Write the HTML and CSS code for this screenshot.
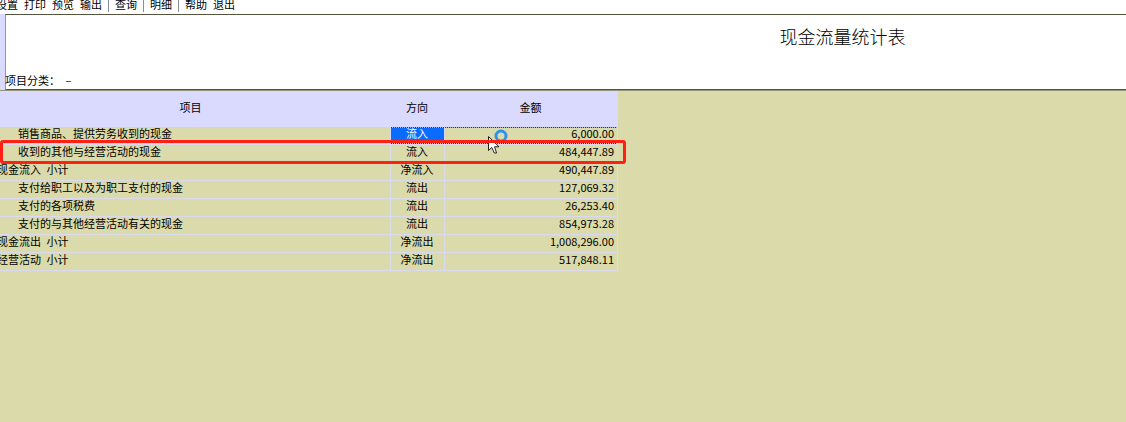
FILE: index.html
```
<!DOCTYPE html>
<html lang="zh-CN">
<head>
<meta charset="utf-8">
<title>现金流量统计表</title>
<link rel="stylesheet" href="styles.css">
</head>
<body>
<nav class="toolbar">
  <button type="button">设置</button>
  <button type="button">打印</button>
  <button type="button">预览</button>
  <button type="button">输出</button>
  <span class="separator"></span>
  <button type="button">查询</button>
  <span class="separator"></span>
  <button type="button">明细</button>
  <span class="separator"></span>
  <button type="button">帮助</button>
  <button type="button">退出</button>
</nav>
<header class="report-head">
  <div class="sheet">
    <h1>现金流量统计表</h1>
    <p>项目分类：&ensp;–</p>
  </div>
</header>
<main class="grid-area">
  <table class="cashflow">
    <colgroup><col class="col-item"><col class="col-direction"><col class="col-amount"></colgroup>
    <thead>
      <tr><th scope="col">项目</th><th scope="col">方向</th><th scope="col">金额</th></tr>
    </thead>
    <tbody>
      <tr class="current"><td class="detail">销售商品、提供劳务收到的现金</td><td class="selected">流入</td><td>6,000.00</td></tr>
      <tr><td class="detail">收到的其他与经营活动的现金</td><td>流入</td><td>484,447.89</td></tr>
      <tr><td>现金流入&ensp;小计</td><td>净流入</td><td>490,447.89</td></tr>
      <tr><td class="detail">支付给职工以及为职工支付的现金</td><td>流出</td><td>127,069.32</td></tr>
      <tr><td class="detail">支付的各项税费</td><td>流出</td><td>26,253.40</td></tr>
      <tr><td class="detail">支付的与其他经营活动有关的现金</td><td>流出</td><td>854,973.28</td></tr>
      <tr><td>现金流出&ensp;小计</td><td>净流出</td><td>1,008,296.00</td></tr>
      <tr><td>经营活动&ensp;小计</td><td>净流出</td><td>517,848.11</td></tr>
    </tbody>
  </table>
  <svg class="pointer" width="22" height="26" viewBox="0 0 22 26" aria-hidden="true">
    <circle cx="13" cy="7" r="5" fill="none" stroke="#2b93ee" stroke-width="3"/>
    <path d="M.5 7.500V21.500L3.800 18.500L6.300 24H8.600L6.500 17.800H11Z" fill="#fff" stroke="#222" stroke-width="1"/>
  </svg>
  <div class="highlight"></div>
</main>
</body>
</html>
```
FILE: styles.css
```
* { box-sizing: border-box; }

body {
  margin: 0;
  min-height: 100vh;
  display: flex;
  flex-direction: column;
  overflow: hidden;
  background: #dbdaaa;
  color: #000;
  font: 11px/14px "Noto Sans CJK SC", sans-serif;
}

.toolbar {
  display: flex;
  align-items: center;
  gap: 6px;
  height: 14px;
  margin-left: -4px;
  padding-bottom: 6px;
  background: #fff;
}

.toolbar button {
  flex: none;
  padding: 0;
  border: 0;
  background: none;
  color: inherit;
  font: inherit;
}

.separator {
  width: 1px;
  height: 16px;
  background: #8a8a9c;
}

.report-head {
  padding-left: 5px;
  overflow: hidden;
  background: #dadaff;
  border-bottom: 1px solid #96957c;
}

/* The sheet is wider than the visible window; its title is centred on it. */
.sheet {
  min-width: 1675px;
  height: 76px;
  display: flex;
  flex-direction: column;
  justify-content: space-between;
  padding: 9px 0 2px;
  background: #fff;
  border: 1px solid #55553f;
  border-left-color: #99998c;
}

.sheet h1 {
  margin: 0;
  text-align: center;
  font-size: 18px;
  font-weight: 300;
  line-height: 24px;
}

.sheet p { margin: 0; margin-left: -1px; }

.grid-area { position: relative; }

.cashflow {
  width: 626px;
  margin-left: -8px;
  table-layout: fixed;
  border-collapse: separate;
  border-spacing: 0;
}

.col-item { width: 399px; }
.col-direction { width: 54px; }

.cashflow th {
  height: 36px;
  padding: 0 2px 4px 0;
  background: #dadaff;
  font-weight: 400;
}

.cashflow td {
  height: 18px;
  padding: 0 3px 3px 2px;
  border-right: 1px solid #dadaee;
  border-bottom: 1px solid #dadaee;
  line-height: 12px;
  text-align: center;
  vertical-align: top;
  white-space: nowrap;
}

.cashflow td:first-child { padding-left: 5px; text-align: left; }
.cashflow td.detail:first-child { padding-left: 26px; }
.cashflow td:last-child { text-align: right; }

/* Dotted focus lines above and below the active cells. */
.current td + td {
  background-image:
    linear-gradient(90deg, #333 50%, #bbb 50%),
    linear-gradient(90deg, #333 50%, #dbdaaa 50%);
  background-repeat: repeat-x;
  background-size: 2px 1px;
  background-position: left top, left bottom;
  background-clip: padding-box;
}

.current td.selected { background-color: #0a6cff; color: #fff; }

.pointer {
  position: absolute;
  left: 488px;
  top: 38px;
}

.highlight {
  position: absolute;
  left: 0;
  top: 49px;
  width: 626px;
  height: 24px;
  border: 3px solid #ff2014;
  border-radius: 3px;
}
```
